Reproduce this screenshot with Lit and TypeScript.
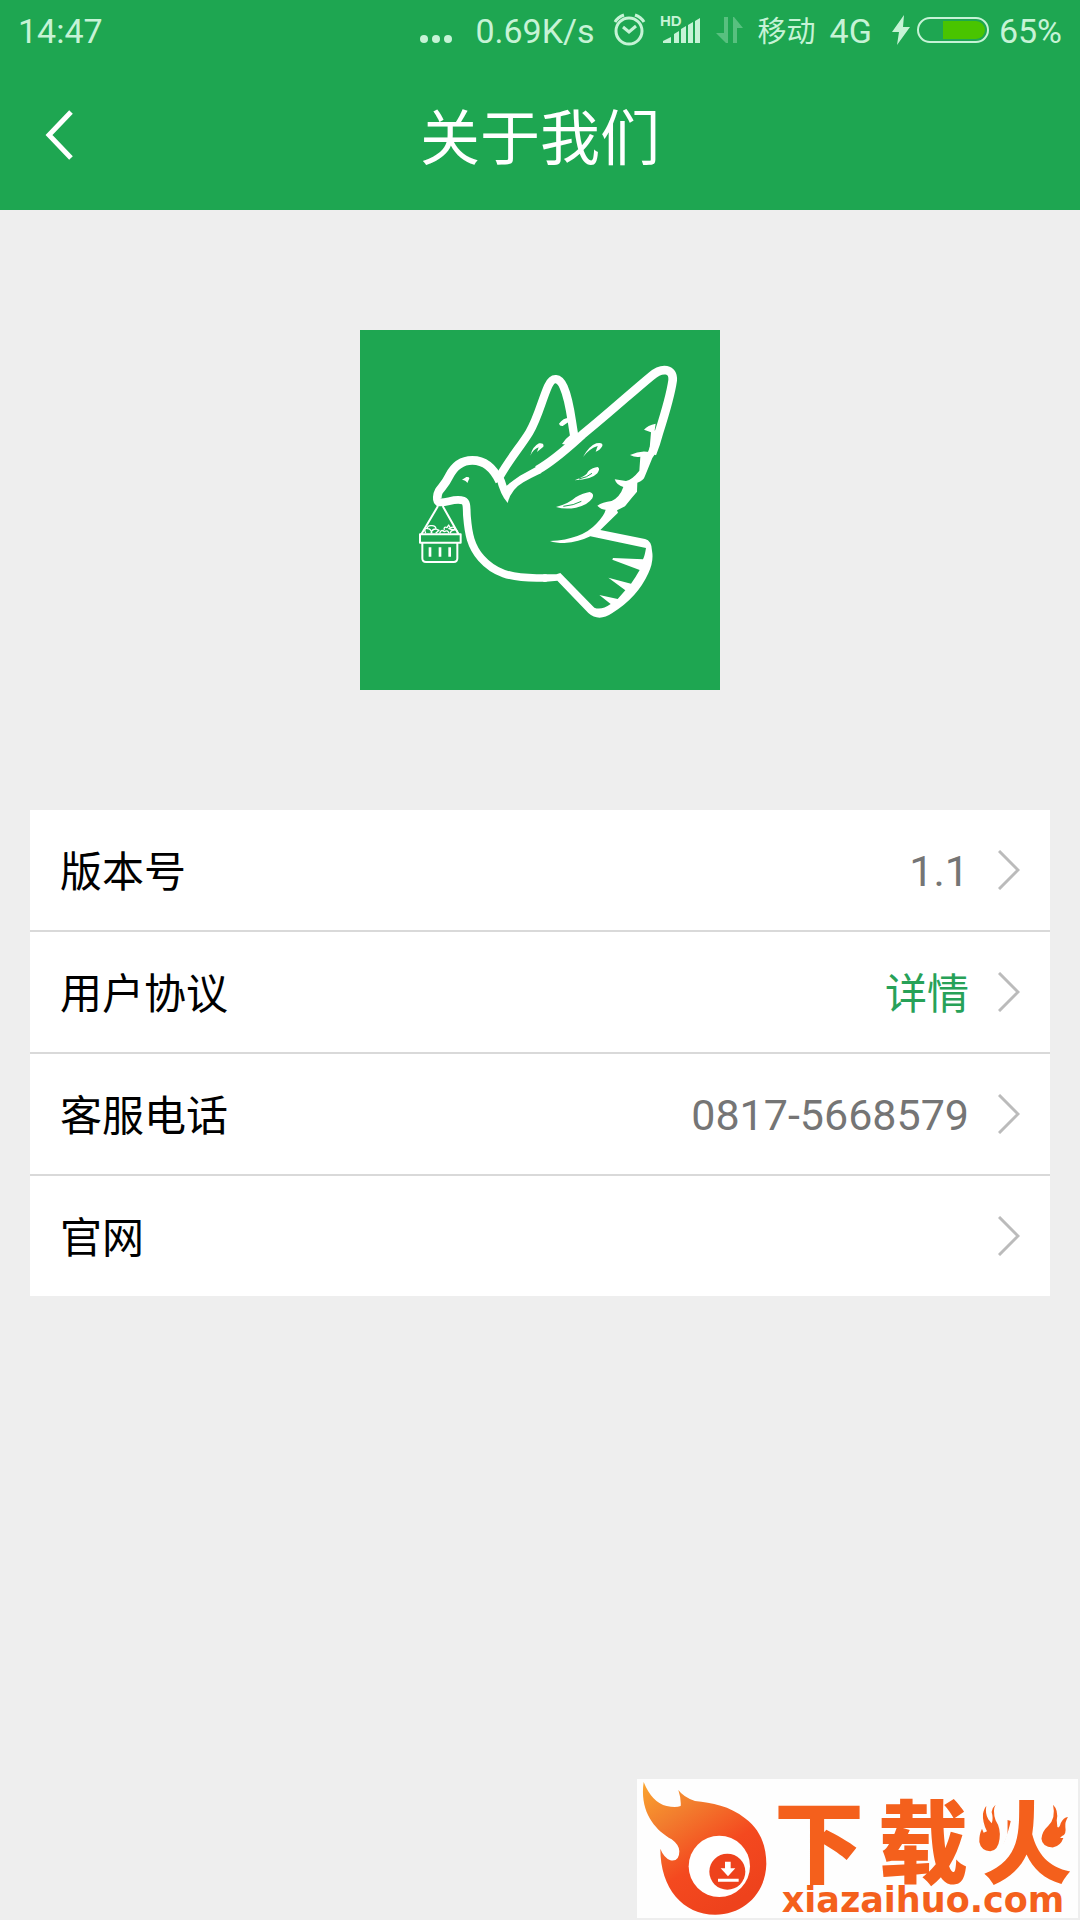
import { LitElement, html, css, nothing } from "lit";
import { customElement, property } from "lit/decorators.js";

@customElement("status-bar")
class StatusBar extends LitElement {
  static styles = css`
    :host {
      display: flex;
      align-items: center;
      justify-content: space-between;
      height: 60px;
      padding: 0 18px;
      color: #c6f3d6;
      font: 34px/60px Roboto, "Noto Sans CJK SC", sans-serif;
    }
    .side { display: flex; align-items: center; white-space: nowrap; }
    .side span { padding-top: 2px; }
    .icons { display: flex; align-items: center; gap: 14px; margin: 0 14px 0 18px; }
    .dots { margin-right: 22px; }
    .network { margin-right: 20px; }
    .battery { margin: 0 9px 0 6px; }
    .side .carrier { font-size: 29px; margin-right: 14px; padding-top: 4px; }
    svg { display: block; }
    .hd { font: bold 15px "Liberation Sans", sans-serif; }
  `;

  render() {
    return html`
      <div class="side"><span>14:47</span></div>
      <div class="side">
        <svg class="dots" width="34" height="60" viewBox="0 0 34 60" fill="currentColor" aria-hidden="true">
          <circle cx="5" cy="39" r="4" /><circle cx="17" cy="39" r="4" /><circle cx="29" cy="39" r="4" />
        </svg>
        <span>0.69K/s</span>
        <div class="icons">
          <svg width="33" height="60" viewBox="0 0 33 60" fill="none" stroke="currentColor" stroke-width="3" aria-hidden="true">
            <circle cx="16" cy="31" r="13" />
            <path d="M10 27l6 5 7-6M2 22q3-5 9-7M31 22q-3-5-9-7" />
          </svg>
          <svg width="42" height="60" viewBox="0 0 42 60" fill="currentColor" aria-hidden="true">
            <text class="hd" x="0" y="26">HD</text>
            <path d="M3 43v-2l8-4v6zM14 43v-9l5-3v12zM21 43v-14l5-3v17zM28 43v-18l5-3v21zM35 43v-22l5-3v25z" />
          </svg>
          <svg width="28" height="60" viewBox="0 0 28 60" fill="#58c07f" aria-hidden="true">
            <path d="M8 17h4v26h-2L0 33h8zM17 43h4V28h6L18 17h-1z" />
          </svg>
        </div>
        <span class="carrier">移动</span>
        <span class="network">4G</span>
        <svg width="18" height="60" viewBox="0 0 18 60" fill="currentColor" aria-hidden="true">
          <path d="M12 15L0 32h7L5 45 18 27h-7z" />
        </svg>
        <svg class="battery" width="74" height="60" viewBox="0 0 74 60" aria-hidden="true">
          <rect x="2" y="18" width="70" height="24" rx="12" fill="none" stroke="currentColor" stroke-width="2" />
          <path d="M27 21h33a9 9 0 0 1 0 18H27z" fill="#49c400" />
        </svg>
        <span>65%</span>
      </div>
    `;
  }
}

@customElement("dove-logo")
class DoveLogo extends LitElement {
  static styles = css`
    :host { display: block; width: 360px; background: #1ea651; }
    svg { display: block; width: 100%; height: auto; }
  `;

  render() {
    return html`
      <svg viewBox="0 0 1080 1080" role="img" aria-label="logo" fill="none" stroke="#fff" stroke-linejoin="round">
        <g transform="translate(120 60)">
          <path stroke-width="26" d="M118 456C108 452 112 432 117 423C128 408 137 400 147 379C163 347 189 331 217 331C254 331 281 355 299 394" />
          <path stroke-width="23" d="M112 456C136 463 162 442 190 452C203 457 199 480 201 500C205 550 212 590 244 625C282 668 330 684 410 684H440" />
          <path fill="#fff" stroke="none" d="M289 384L308 376Q316 392 320 407Q335 394 360 377L420 344L424 369Q392 384 370 397Q333 418 323 459Q301 435 289 384z" />
          <path fill="#fff" stroke="none" d="M186 389L199 381Q211 380 207 388L202 399Q199 392 186 389zM391 317Q397 290 417 280Q433 278 430 290L411 306L416 292Q400 298 391 317z" />
          <g stroke-width="6">
            <path d="M114 468L64 553M128 468L176 553" />
            <path d="M60 553h122v25H60zM67 580v45q0 11 11 11h83q11 0 11-11v-45" />
            <path stroke-width="8" d="M90 592v28M120 592v28M149 592v28" />
            <path stroke-width="4" d="M77 550Q70 532 82 536Q82 526 94 527Q107 526 108 537L117 541L107 550M82 536q10-1 14 14M93 550q2-13 15-13M119 550q4-14 14-5q10-7 14 5M133 540q-3-12 8-7l5-8l5 9q11-7 14 4q10 5 7 14M145 535q9 5 20 4M151 550q1-11 14-10" />
          </g>
        </g>
        <g transform="translate(540 60)">
          <path stroke-width="25" d="M-120 378C-92 328 -57 288 -32 247C-6 203 5 152 24 109C38 78 58 82 71 111C91 155 94 215 104 264" />
          <path stroke-width="26" d="M-8 360C45 330 88 289 127 254C206 190 276 126 333 79C367 50 401 56 398 91C391 140 372 200 357 247C352 266 346 286 336 311" />
          <path fill="#fff" stroke="none" d="M344 241L347 221Q323 225 312 239L333 247L328 306Q300 300 270 315Q286 323 301 320L298 362Q277 389 258 393L224 388Q230 406 250 411Q240 441 215 453Q187 457 172 467Q185 480 197 479Q193 496 169 521Q126 568 30 573Q46 579 73 579Q117 576 151 559L318 594Q314 619 309 628L219 624L217 629L299 660Q288 680 273 701L205 683L256 721L233 747L178 735L212 762Q184 782 163 773L61 669L49 673H10V696L52 692L145 789Q176 817 217 789Q292 743 325 670Q342 634 336 602Q335 572 315 567L181 540L234 488L231 481L255 469Q275 443 291 425L292 398Q311 391 314 380L337 324L349 306L358 266z" />
          <path fill="#fff" stroke="none" d="M90 203Q70 202 57 221Q59 229 68 228L90 213zM91 255Q75 267 66 282L88 286L110 267zM129 321Q148 287 169 280Q190 276 187 288Q181 300 167 305L173 288Q149 295 129 321zM104 391Q140 378 145 364Q158 352 173 351Q182 355 172 370Q155 389 104 391zM48 471Q85 462 107 442Q130 429 149 426Q164 430 157 445Q143 466 108 473Q75 479 48 471z" />
          <path stroke="#1ea651" stroke-width="3" d="M117 387Q142 382 156 370M70 469Q102 466 124 454" />
        </g>
      </svg>
    `;
  }
}

@customElement("info-row")
class InfoRow extends LitElement {
  @property() label = "";
  @property() value = "";
  @property() href = "#";
  @property({ type: Boolean }) accent = false;

  static styles = css`
    :host { display: block; background: #fff; }
    .row {
      display: flex;
      align-items: center;
      height: 120px;
      padding: 0 30px;
      color: #000;
      font: 42px/60px Roboto, "Noto Sans CJK SC", sans-serif;
      text-decoration: none;
    }
    .label { flex: 1; padding-top: 6px; }
    .value { padding-top: 2px; color: #757575; font-size: 43px; }
    .accent { padding-top: 6px; color: #27a158; font-size: 42px; }
    .chevron { margin-left: 29px; }
  `;

  render() {
    return html`
      <a class="row" href=${this.href}>
        <span class="label">${this.label}</span>
        ${this.value ? html`<span class="value ${this.accent ? "accent" : ""}">${this.value}</span>` : nothing}
        <svg class="chevron" width="22" height="40" viewBox="0 0 22 40" fill="none" stroke="#bbb" stroke-width="3" aria-hidden="true">
          <path d="M1 1l19 19L1 39" />
        </svg>
      </a>
    `;
  }
}

@customElement("site-badge")
class SiteBadge extends LitElement {
  static styles = css`
    :host { display: block; }
    .badge {
      display: flex;
      width: 441px;
      height: 139px;
      background: #fefefe;
      color: #f4601c;
      text-decoration: none;
    }
    .flame { display: block; flex: none; }
    .words { position: relative; flex: 1; white-space: nowrap; }
    .name {
      display: flex;
      justify-content: center;
      gap: 14px;
      margin-top: 10px;
      font: 900 90px/96px "Noto Sans CJK SC", sans-serif;
    }
    .domain { display: block; margin-top: 3px; text-align: center; font: bold 35px/24px "DejaVu Sans", sans-serif; }
    .sparks { position: absolute; right: 8px; top: 23px; }
  `;

  render() {
    return html`
      <a class="badge" href="#">
        <svg class="flame" width="131" height="139" viewBox="21 27 393 417" aria-hidden="true">
          <defs>
            <linearGradient id="fire" x1="0" y1="0" x2=".6" y2="1">
              <stop offset="0" stop-color="#fba52f" />
              <stop offset=".3" stop-color="#f27d2e" />
              <stop offset=".65" stop-color="#f4491f" />
              <stop offset="1" stop-color="#ee421c" />
            </linearGradient>
          </defs>
          <path fill="url(#fire)" d="M41 36Q66 98 110 108Q137 114 152 108Q154 87 145 60Q161 82 195 93C245 98 300 108 345 145C390 178 409 226 409 282C407 370 342 434 256 434C158 434 91 354 91 236Q101 262 121 271Q148 276 148 244Q148 225 125 208C74 180 28 124 41 36z" />
          <circle cx="268" cy="289" r="92" fill="#fff" />
          <circle cx="292" cy="305" r="54" fill="#ee421c" />
          <path fill="#fff" d="M285 275h17v20h14l-22 24-22-24h13zM264 326h62v9h-62z" />
        </svg>
        <span class="words">
          <span class="name"><span>下</span><span>载</span><span>火</span></span>
          <span class="domain">xiazaihuo.com</span>
          <svg class="sparks" width="93" height="50" viewBox="20 20 280 150" fill="currentColor" aria-hidden="true">
            <path fill="#fefefe" d="M22 22H112V118L90 170H22zM202 22H300V150L236 165L202 130z" />
            <path d="M76 28Q66 45 76 75Q92 100 88 130Q84 165 60 168Q32 166 27 140Q26 118 35 100L40 112L50 108Q36 80 38 55Q42 38 48 32Q44 55 54 72L64 84Q70 70 64 50Q66 36 76 28z" />
            <path d="M249 28Q266 45 260 75L262 95Q268 100 272 84Q280 66 294 65Q284 80 286 95Q290 118 276 122L270 128L280 128Q272 152 248 157Q216 154 214 130Q216 108 234 92Q258 70 249 28z" />
          </svg>
        </span>
      </a>
    `;
  }
}

@customElement("app-root")
class AppRoot extends LitElement {
  static styles = css`
    :host {
      display: flex;
      flex-direction: column;
      min-height: 100vh;
      box-sizing: border-box;
      padding-bottom: 2px;
      background: #eee;
    }
    .top { background: #1ea651; }
    .bar { display: grid; grid-template-columns: 120px 1fr 120px; align-items: center; height: 150px; }
    .back { height: 150px; padding: 0 0 0 44px; border: 0; background: none; text-align: left; }
    .back svg { display: block; }
    .title {
      margin: 0;
      padding-bottom: 2px;
      color: #fff;
      text-align: center;
      font: 400 60px/84px "Noto Sans CJK SC", sans-serif;
    }
    .logo { margin: 120px auto; }
    .list { display: grid; gap: 2px; margin: 0 30px; background: #d9d9d9; }
    .badge { margin: auto 2px 0 auto; }
  `;

  render() {
    return html`
      <header class="top">
        <status-bar></status-bar>
        <div class="bar">
          <button class="back" aria-label="返回">
            <svg width="30" height="52" viewBox="0 0 30 52" fill="none" stroke="#fff" stroke-width="5" aria-hidden="true">
              <path d="M27 3L5 26l22 23" />
            </svg>
          </button>
          <h1 class="title">关于我们</h1>
        </div>
      </header>
      <dove-logo class="logo"></dove-logo>
      <nav class="list">
        <info-row label="版本号" value="1.1"></info-row>
        <info-row label="用户协议" value="详情" accent></info-row>
        <info-row label="客服电话" value="0817-5668579" href="tel:0817-5668579"></info-row>
        <info-row label="官网"></info-row>
      </nav>
      <site-badge class="badge"></site-badge>
    `;
  }
}
